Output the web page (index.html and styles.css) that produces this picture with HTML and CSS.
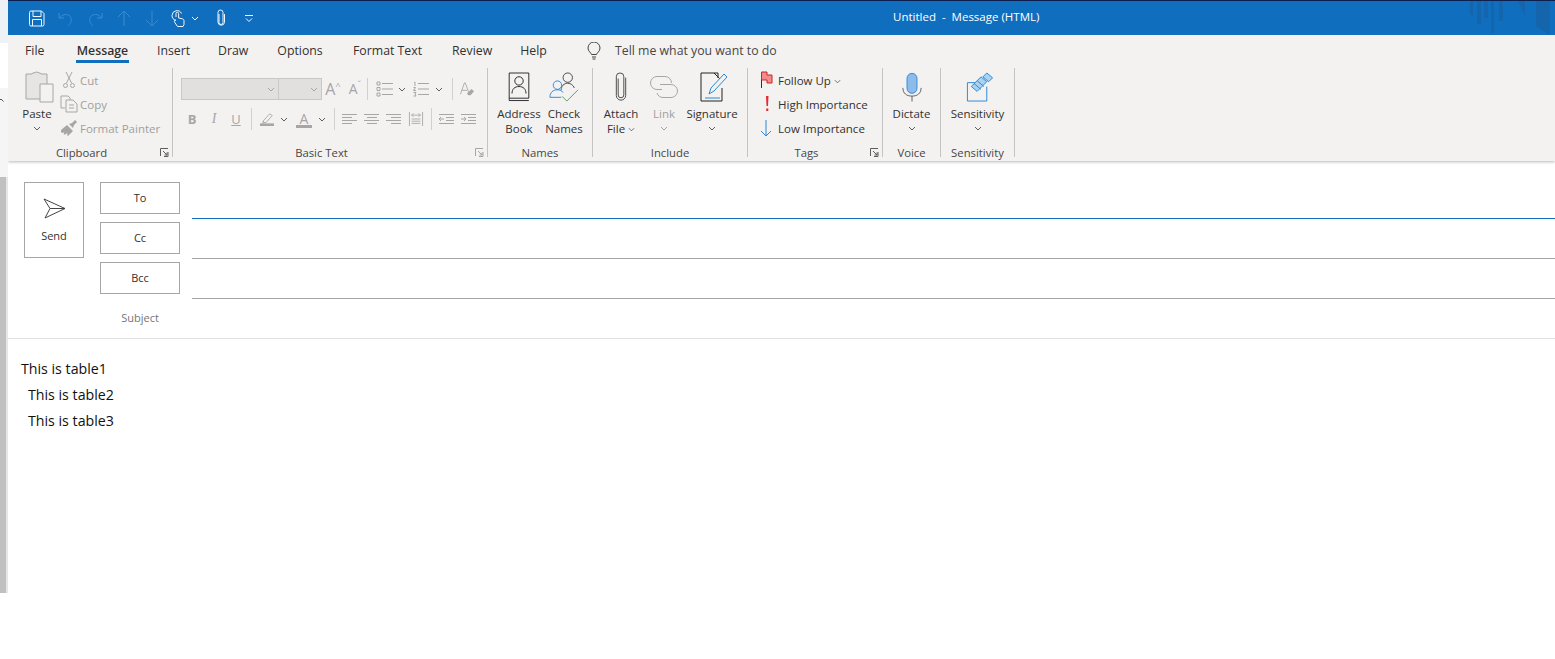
FILE: index.html
```html
<!DOCTYPE html>
<html lang="en">
<head>
<meta charset="utf-8">
<title>Untitled - Message (HTML)</title>
<link rel="stylesheet" href="styles.css">
</head>
<body>
<div class="page">
  <div class="rail">
    <div class="rail-a"></div>
    <div class="rail-b"></div>
    <div class="rail-c"><svg class="rail-caret" viewBox="0 0 6 4"><path d="M.5 3.5 3 1l2.5 2.5"/></svg></div>
    <div class="rail-d"></div>
  </div>
  <div class="app">
    <header class="titlebar">
      <div class="qat">
        <svg class="q q-save" viewBox="0 0 16 17"><path d="M2 1h10.500L15 3.500V14.500a1.500 1.500 0 0 1-1.500 1.500H2A1.500 1.500 0 0 1 .5 14.500V2.500A1.500 1.500 0 0 1 2 1zM4 1v5.500h8V1M3.500 16v-6.500h9V16"/></svg>
        <svg class="q q-undo dim" viewBox="0 0 16 17"><path d="M1 3v5h5M1.500 8C4 4.500 8 3.500 11 5.500c3.500 2.500 3 7-1 10.500"/></svg>
        <svg class="q q-redo dim" viewBox="0 0 16 17"><path d="M15 3v5h-5M14.500 8C12 4.500 8 3.500 5 5.500c-3.500 2.500-3 7 1 10.500"/></svg>
        <svg class="q q-up dim" viewBox="0 0 14 17"><path d="M7 16V1M1 7l6-6 6 6"/></svg>
        <svg class="q q-down dim" viewBox="0 0 14 17"><path d="M7 1v15M1 10l6 6 6-6"/></svg>
        <svg class="q q-touch" viewBox="0 0 14 18"><path d="M5 11.500C2 10.500 1 8.500 1 6.500a5 5 0 0 1 9.500-2M5 8V4.500a1.300 1.300 0 0 1 2.600 0V9l3.900.8c1 .3 1.500 1 1.500 2v3.700l-1 2H6.500L3.500 13c-.7-1.200.7-2.500 1.500-1.500"/></svg>
        <svg class="chev q-chev" viewBox="0 0 8 5"><path d="M1 1l3 3 3-3"/></svg>
        <svg class="q q-clip" viewBox="0 0 10 18"><path d="M3 5v8.500a2 2 0 0 0 4 0V3.500a2.500 2.500 0 0 0-5 0v10a3.300 3.300 0 0 0 6.500 0V5"/></svg>
        <svg class="q q-more" viewBox="0 0 8 8"><path d="M0 1.500h8M1 4.500l3 3 3-3"/></svg>
      </div>
      <div class="doc-title">Untitled&nbsp; -&nbsp; Message (HTML)</div>
      <svg class="title-art" viewBox="0 0 85 34"><path d="M0 0h3v14H0zM7 0h4v23H7zM14 0h4v17h-4zM21 0h3v32h-3zM29 0h4v20h-4zM48 0h7v15zM66 0h14v34L66 25z"/></svg>
    </header>

    <nav class="tabs">
      <span class="tab t-file">File</span>
      <span class="tab t-msg active">Message</span>
      <span class="tab t-ins">Insert</span>
      <span class="tab t-draw">Draw</span>
      <span class="tab t-opt">Options</span>
      <span class="tab t-fmt">Format Text</span>
      <span class="tab t-rev">Review</span>
      <span class="tab t-help">Help</span>
      <svg class="bulb" viewBox="0 0 14 18"><path d="M4.500 12.500C4 10.500 1 9.500 1 6a6 6 0 0 1 12 0c0 3.500-3 4.500-3.500 6.500zM5 15h4M5.500 17h3"/></svg>
      <span class="tell">Tell me what you want to do</span>
    </nav>

    <section class="ribbon">
      <div class="group g-clip">
        <div class="content">
          <div class="tall b-paste off-dark">
            <svg class="ico ic-paste" viewBox="0 0 27 30"><path class="grey-fill" d="M0 2h6V1.500L10.500 0 15 1.500V2h6v25H0z"/><path class="grey-fill light" d="M14 12h13v18H14z"/></svg>
            <span>Paste</span>
            <svg class="chev" viewBox="0 0 8 5"><path d="M1 1l3 3 3-3"/></svg>
          </div>
          <div class="smalls s-clip">
            <div class="small off"><svg class="si" viewBox="0 0 18 18"><path d="M6 1l5.500 11M12 1 6.500 12"/><circle cx="5.500" cy="14.500" r="2"/><circle cx="12.500" cy="14.500" r="2"/></svg><span>Cut</span></div>
            <div class="small off"><svg class="si" viewBox="0 0 18 18"><path d="M5 13H1V1h7l2 2v2M6 5h7l4 4v8H6zM9 10h5M9 13h5"/></svg><span>Copy</span></div>
            <div class="small off"><svg class="si" viewBox="0 0 18 18"><path class="solid" d="M1 11l6-5 6 6-5 5c-1-1-1-1-.5-3L5 15.500C3.500 16 3.500 15 4.500 13L2.500 14C1 14 1 12 1 11zM9 5l3-1 3-3 2 2-3 3-1 3z"/></svg><span>Format Painter</span></div>
          </div>
        </div>
        <div class="glabel with-launcher">Clipboard
          <svg class="launch" viewBox="0 0 9 9"><path d="M.5 8V.5H8M8 4v4.500H4M3 3l4 4M7 4.500V7H4.500"/></svg>
        </div>
      </div>

      <div class="group g-basic">
        <div class="content basic">
          <div class="brow">
            <div class="select sel-font"><svg class="chev" viewBox="0 0 8 5"><path d="M1 1l3 3 3-3"/></svg></div>
            <div class="select sel-size"><svg class="chev" viewBox="0 0 8 5"><path d="M1 1l3 3 3-3"/></svg></div>
            <span class="ab w22 glyph big">A<sup>^</sup></span>
            <span class="ab w22 glyph mid">A<sup>ˇ</sup></span>
            <i class="vsep"></i>
            <svg class="line16 ml9" viewBox="0 0 16 14"><path class="dots" d="M0 0h3v3H0zM0 5.500h3v3H0zM0 11h3v3H0z"/><path d="M5 1.500h11M5 7h11M5 12.500h11"/></svg>
            <svg class="chev ml5" viewBox="0 0 8 5"><path d="M1 1l3 3 3-3"/></svg>
            <svg class="line16 ml7" viewBox="0 0 16 14"><path d="M5 1.500h11M5 7h11M5 12.500h11M1 .5l1-.3V4M.5 5.500h2l-2 3h2.500M.5 10.500h2.500l-1 1.500 1 2H.5"/></svg>
            <svg class="chev ml6" viewBox="0 0 8 5"><path d="M1 1l3 3 3-3"/></svg>
            <i class="vsep ms9"></i>
            <svg class="line16 ml6" viewBox="0 0 16 16"><path d="M.5 14 5 1h1l4 11M2 9.500h6"/><path class="solid" d="M8 13l5-5 3 2.500-4 4.500H9.500z"/></svg>
          </div>
          <div class="brow">
            <span class="ab w22 glyph bold">B</span>
            <span class="ab w22 glyph ital">I</span>
            <span class="ab w22 glyph under">U</span>
            <i class="vsep ms4"></i>
            <svg class="line16 ml7" viewBox="0 0 16 16"><path d="M4 10 11 2l3 2-7 8H4zM3 13l1-3"/><path class="solid" d="M0 13h16v3H0z"/></svg>
            <svg class="chev ml5" viewBox="0 0 8 5"><path d="M1 1l3 3 3-3"/></svg>
            <span class="ab fc glyph">A</span>
            <svg class="chev ml6" viewBox="0 0 8 5"><path d="M1 1l3 3 3-3"/></svg>
            <i class="vsep ms8"></i>
            <svg class="line16 ml7" viewBox="0 0 16 12"><path d="M0 1.500h15M0 4.500h10M0 7.500h15M0 10.500h10"/></svg>
            <svg class="line16 ml6" viewBox="0 0 16 12"><path d="M0 1.500h15M3 4.500h10M0 7.500h15M3 10.500h10"/></svg>
            <svg class="line16 ml6" viewBox="0 0 16 12"><path d="M0 1.500h15M5 4.500h10M0 7.500h15M5 10.500h10"/></svg>
            <svg class="line16 ml6" viewBox="0 0 16 16"><path d="M.5 0v16M15.500 0v16M3 3.500h10M5 1.500l-2 2 2 2M11 1.500l2 2-2 2M3 8h10M3 10.500h10M3 13h10"/></svg>
            <i class="vsep ms7"></i>
            <svg class="line16 ml7" viewBox="0 0 16 12"><path d="M0 1.500h15M7 4.500h8M7 7.500h8M0 10.500h15M5 6H0M2 4 0 6l2 2"/></svg>
            <svg class="line16 ml6" viewBox="0 0 16 12"><path d="M0 1.500h15M7 4.500h8M7 7.500h8M0 10.500h15M0 6h5M3 4l2 2-2 2"/></svg>
          </div>
        </div>
        <div class="glabel with-launcher">Basic Text
          <svg class="launch pale" viewBox="0 0 9 9"><path d="M.5 8V.5H8M8 4v4.500H4M3 3l4 4M7 4.500V7H4.500"/></svg>
        </div>
      </div>

      <div class="group g-names">
        <div class="content">
          <div class="tall b-addr">
            <svg class="ico" viewBox="0 0 30 32"><path d="M4.500 1h21v27h-21zM4.500 28v2.500h21"/><circle cx="15" cy="9.500" r="4.500"/><path d="M7.500 23c0-5 3-7.500 7.500-7.500s7.500 2.500 7.500 7.500"/></svg>
            <span>Address<br>Book</span>
          </div>
          <div class="tall b-check">
            <svg class="ico" viewBox="0 0 32 32"><circle cx="20" cy="6" r="5"/><path d="M13 19c0-4 3-7 7-7 3 0 6 2 7 5"/><g class="blue"><circle cx="9" cy="14" r="4.500"/><path d="M1 27c0-5 3-8 8-8 3 0 5 1 6 3M1 27h12"/></g><path class="green" d="M14 26l5 5 12-12"/></svg>
            <span>Check<br>Names</span>
          </div>
        </div>
        <div class="glabel">Names</div>
      </div>

      <div class="group g-incl">
        <div class="content">
          <div class="tall b-attach">
            <svg class="ico" viewBox="0 0 14 32"><path d="M4 7v17.500a3 3 0 0 0 6 0V5a4 4 0 0 0-8 0v20a5 5 0 0 0 10 0V6"/></svg>
            <span>Attach<br>File <svg class="chev inl" viewBox="0 0 8 5"><path d="M1 1l3 3 3-3"/></svg></span>
          </div>
          <div class="tall b-link off">
            <svg class="ico ic-link" viewBox="0 0 28 23"><path d="M12 14H7A6.500 6.500 0 0 1 7 1h8a6.500 6.500 0 0 1 6.500 6.500"/><path d="M10 9h11a6.500 6.500 0 0 1 0 13h-8a6.500 6.500 0 0 1-6-4.500"/></svg>
            <span>Link</span>
            <svg class="chev" viewBox="0 0 8 5"><path d="M1 1l3 3 3-3"/></svg>
          </div>
          <div class="tall b-sig">
            <svg class="ico" viewBox="0 0 28 30"><path d="M18 6V1H1v28h21V16M14 1l6 6"/><path class="blue" d="M9 22l2-6L24 2l3 3L14 19zM5 26h15"/></svg>
            <span>Signature</span>
            <svg class="chev" viewBox="0 0 8 5"><path d="M1 1l3 3 3-3"/></svg>
          </div>
        </div>
        <div class="glabel">Include</div>
      </div>

      <div class="group g-tags">
        <div class="content">
          <div class="smalls">
            <div class="small"><svg class="si" viewBox="0 0 18 18"><path d="M1.500 1v16"/><path class="flag" d="M1.500 1H7v3h5v8H7V9H1.500z"/></svg><span>Follow Up <svg class="chev inl" viewBox="0 0 8 5"><path d="M1 1l3 3 3-3"/></svg></span></div>
            <div class="small"><svg class="si" viewBox="0 0 18 18"><path class="bang" d="M6 1h2.500L8 11H6.500zM6.200 13.500h2.100v2.500H6.200z"/></svg><span>High Importance</span></div>
            <div class="small"><svg class="si" viewBox="0 0 18 18"><path class="blue" d="M6 1v16M1 12l5 5 5-5"/></svg><span>Low Importance</span></div>
          </div>
        </div>
        <div class="glabel with-launcher">Tags
          <svg class="launch" viewBox="0 0 9 9"><path d="M.5 8V.5H8M8 4v4.500H4M3 3l4 4M7 4.500V7H4.500"/></svg>
        </div>
      </div>

      <div class="group g-voice">
        <div class="content">
          <div class="tall b-one">
            <svg class="ico" viewBox="0 0 22 32"><rect class="mic" x="5.500" y="1" width="11" height="22" rx="5.500"/><path d="M1 17c0 6 4 9 10 9s10-3 10-9M11 26v6"/></svg>
            <span>Dictate</span>
            <svg class="chev" viewBox="0 0 8 5"><path d="M1 1l3 3 3-3"/></svg>
          </div>
        </div>
        <div class="glabel">Voice</div>
      </div>

      <div class="group g-sens">
        <div class="content">
          <div class="tall b-one">
            <svg class="ico" viewBox="0 0 28 31"><path class="blue" d="M14 11H1v19h20V15"/><path class="pale-blue" d="M5 15 15 5l6 5-10 10zM17 5l4-4 6 5-4 4z"/><path class="blue" d="M8 12l7 6M11 9l7 6"/></svg>
            <span>Sensitivity</span>
            <svg class="chev" viewBox="0 0 8 5"><path d="M1 1l3 3 3-3"/></svg>
          </div>
        </div>
        <div class="glabel">Sensitivity</div>
      </div>
    </section>

    <section class="compose">
      <div class="headers">
        <button class="send">
          <svg class="plane" viewBox="0 0 23 21"><path d="M1 1l21 9.500L2 20l5-9.500zM7 10.500h15"/></svg>
          <span>Send</span>
        </button>
        <div class="fields">
          <div class="field"><button class="addr">To</button><div class="line focus"></div></div>
          <div class="field"><button class="addr">Cc</button><div class="line"></div></div>
          <div class="field"><button class="addr">Bcc</button><div class="line"></div></div>
          <div class="field subject"><span class="subj">Subject</span></div>
        </div>
      </div>
      <div class="body-text">
        <p class="first">This is table1</p>
        <p>This is table2</p>
        <p>This is table3</p>
      </div>
    </section>
  </div>
</div>
</body>
</html>
```

FILE: styles.css
```css
* { box-sizing: border-box; }
html, body { margin: 0; padding: 0; height: 100%; background: #fff; overflow: hidden; }
body { font-family: "Open Sans", "Noto Sans", sans-serif; font-size: 11.500px; color: #323130; }
svg { display: block; flex: none; fill: none; stroke: currentColor; stroke-width: 1; }
.page { display: flex; width: 1555px; height: 659px; }

.rail { width: 8px; flex: none; display: flex; flex-direction: column; }
.rail-a { height: 43px; background: #eef2f6; }
.rail-b { height: 45px; background: #fff; }
.rail-c { height: 89px; background: #f5f5f5; padding-top: 10px; }
.rail-caret { width: 6px; height: 4px; color: #555; margin-left: -2px; }
.rail-d { height: 416px; background: #c0c0c0; border-right: 2px solid #e6e6e6; }

.app { flex: 1; min-width: 0; display: flex; flex-direction: column; }

.titlebar { position: relative; height: 35px; flex: none; background: #106ebe; border-top: 1px solid #0d1f4f; display: flex; align-items: center; color: #fff; }
.qat { display: flex; align-items: center; padding-left: 21px; }
.q { height: 17px; color: #f0f6fb; }
.q-save { width: 16px; }
.q-undo, .q-redo { width: 16px; margin-left: 13px; }
.q-up, .q-down { width: 14px; margin-left: 14px; }
.dim { color: #3b8ad0; }
.q-touch { width: 14px; margin-left: 12px; height: 18px; }
.qat .q-chev { width: 8px; height: 5px; margin-left: 6px; color: #fff; }
.q-clip { width: 10px; height: 18px; margin-left: 17px; }
.q-more { width: 8px; height: 8px; margin-left: 19px; }
.doc-title { position: absolute; left: 885px; top: 8px; font-size: 11.500px; line-height: 16px; white-space: nowrap; }
.title-art { position: absolute; right: 0; top: 0; width: 85px; height: 34px; fill: #1565ad; stroke: none; }

.tabs { height: 33px; flex: none; background: #f3f2f1; display: flex; align-items: flex-start; padding-left: 17px; font-size: 12.300px; color: #323130; position: relative; z-index: 1; }
.tab { display: block; height: 28px; line-height: 31px; white-space: nowrap; text-align: center; }
.t-file { width: 19px; }
.t-msg { width: 53px; margin-left: 32px; font-weight: 600; border-bottom: 3px solid #106ebe; }
.t-ins { width: 32px; margin-left: 28px; }
.t-draw { width: 30px; margin-left: 29px; }
.t-opt { width: 46px; margin-left: 29px; }
.t-fmt { width: 68px; margin-left: 30px; }
.t-rev { width: 40px; margin-left: 31px; }
.t-help { width: 27px; margin-left: 28px; }
.bulb { width: 14px; height: 18px; margin: 7px 0 0 40px; color: #444; }
.tell { margin-left: 14px; line-height: 31px; color: #484644; white-space: nowrap; }

.ribbon { height: 93px; flex: none; background: #f3f2f1; display: flex; align-items: flex-start; box-shadow: 0 1px 3px rgba(0,0,0,.28); clip-path: inset(0 0 -6px 0); position: relative; }
.group { height: 89px; flex: none; display: flex; flex-direction: column; border-right: 1px solid #c4c4c4; }
.g-clip { width: 165px; }
.g-basic { width: 315px; }
.g-names { width: 105px; }
.g-incl { width: 155px; }
.g-tags { width: 135px; }
.g-voice { width: 58px; }
.g-sens { width: 74px; }
.content { flex: 1; display: flex; min-height: 0; }
.glabel { position: relative; height: 14px; margin: -7px 0 -3px; line-height: 14px; text-align: center; font-size: 11.300px; color: #484644; white-space: nowrap; }
.with-launcher { padding-right: 17px; }
.launch { position: absolute; right: 3px; top: 2px; width: 9px; height: 9px; color: #605e5c; }
.launch.pale { color: #a6a6a6; }

.tall { display: flex; flex-direction: column; align-items: center; text-align: center; line-height: 15px; padding-top: 4px; white-space: nowrap; flex: none; }
.tall > span { display: block; }
.tall .ico { height: 30px; margin-bottom: 4px; overflow: visible; }
.tall > .chev { margin-top: 5px; }
.chev { width: 8px; height: 5px; color: #605e5c; }
.chev.inl { display: inline-block; vertical-align: 1px; width: 7px; height: 5px; }

.b-paste { width: 34px; margin-left: 12px; }
.ic-paste { width: 27px; margin-left: 5px; }
.grey-fill { fill: #e6e5e4; stroke: #a6a6a6; }
.grey-fill.light { fill: #f3f2f1; }
.off-dark > span { color: #323130; }

.smalls { display: flex; flex-direction: column; }
.s-clip { margin-left: 6px; }
.small { display: flex; align-items: center; height: 24px; gap: 2px; white-space: nowrap; }
.si { width: 18px; height: 18px; }
.off { color: #a19f9d; }
.off svg { color: #a6a6a6; }
.solid { fill: currentColor; stroke: none; }

.basic { flex-direction: column; padding: 10px 0 0 8px; color: #a6a6a6; gap: 8px; }
.brow { display: flex; align-items: center; height: 22px; }
.select { height: 22px; background: #e1e0df; border: 1px solid #c8c8c8; display: flex; align-items: center; justify-content: flex-end; padding-right: 3px; }
.sel-font { width: 98px; }
.sel-size { width: 43px; border-left: 0; }
.select .chev { color: #a6a6a6; }
.ab { display: block; text-align: center; }
.w22 { width: 22px; }
.glyph { color: #a6a6a6; line-height: 22px; font-size: 12px; }
.glyph sup { font-size: 9px; line-height: 0; }
.big { font-size: 16px; }
.mid { font-size: 14px; }
.bold { font-weight: 700; font-size: 13px; }
.ital { font-style: italic; font-family: "Liberation Serif", serif; font-size: 14px; }
.under { text-decoration: underline; font-size: 13px; }
.fc { width: 16px; margin-left: 8px; font-size: 14px; line-height: 17px; border-bottom: 3px solid #a6a6a6; height: 18px; }
.vsep { display: block; width: 1px; height: 22px; background: #d2d0ce; flex: none; margin: 0 0 0 1px; }
.ms4 { margin-left: 4px; }
.ms7 { margin-left: 7px; }
.ms8 { margin-left: 8px; }
.ms9 { margin-left: 9px; }
.line16 { width: 16px; height: 14px; color: #a6a6a6; overflow: visible; }
.ml5 { margin-left: 5px; }
.ml6 { margin-left: 6px; }
.ml7 { margin-left: 7px; }
.ml9 { margin-left: 9px; }

.b-addr { width: 46px; margin-left: 8px; }
.b-addr .ico { width: 28px; color: #222; }
.b-check { width: 44px; }
.b-check .ico { width: 30px; color: #444; }
.blue { color: #2b88d8; stroke: #2b88d8; }
.green { stroke: #4f9d54; }
.b-attach { width: 40px; margin-left: 8px; }
.b-attach .ico { width: 14px; color: #444; }
.b-link { width: 46px; }
.ic-link { width: 28px; }
.b-sig { width: 50px; }
.b-sig .ico { width: 28px; color: #222; margin-left: 4px; }

.g-tags .smalls { padding-left: 10px; }
.g-tags .si { margin-left: 2px; margin-right: -2px; }
.flag { fill: #f58a8a; stroke: #c8252c; }
.bang { fill: #e02b2f; stroke: none; }
.b-one { width: 100%; }
.g-voice .ico { width: 20px; color: #555; }
.mic { fill: #8dbbea; stroke: #2b88d8; }
.g-sens .ico { width: 28px; margin-left: 5px; }
.pale-blue { fill: #a9d2f3; stroke: #2b88d8; }

.compose { flex: 1; min-height: 0; display: flex; flex-direction: column; }
.headers { display: flex; align-items: flex-start; padding: 21px 0 0 16px; height: 178px; flex: none; border-bottom: 1px solid #e1e1e1; }
.send { width: 60px; height: 76px; flex: none; padding: 15px 0 0; background: #fff; border: 1px solid #a6a6a6; font: inherit; font-size: 11px; color: #323130; display: flex; flex-direction: column; align-items: center; gap: 9px; }
.plane { width: 23px; height: 21px; color: #444; }
.fields { flex: 1; margin-left: 16px; display: flex; flex-direction: column; gap: 8px; }
.field { display: flex; height: 32px; align-items: stretch; gap: 12px; }
.addr { width: 80px; flex: none; background: #fff; border: 1px solid #a6a6a6; font: inherit; font-size: 11px; color: #323130; padding: 0 0 2px; }
.line { flex: 1; border-bottom: 1px solid #a6a6a6; height: 37px; }
.line.focus { border-bottom-color: #106ebe; }
.subject { height: 36px; }
.subj { width: 80px; text-align: center; line-height: 32px; font-size: 11px; color: #767676; }
.body-text { padding: 17px 0 0 20px; font-size: 14.200px; color: #111; }
.body-text p { margin: 0; height: 26px; line-height: 26px; }
.body-text .first { margin-left: -7px; }
```
